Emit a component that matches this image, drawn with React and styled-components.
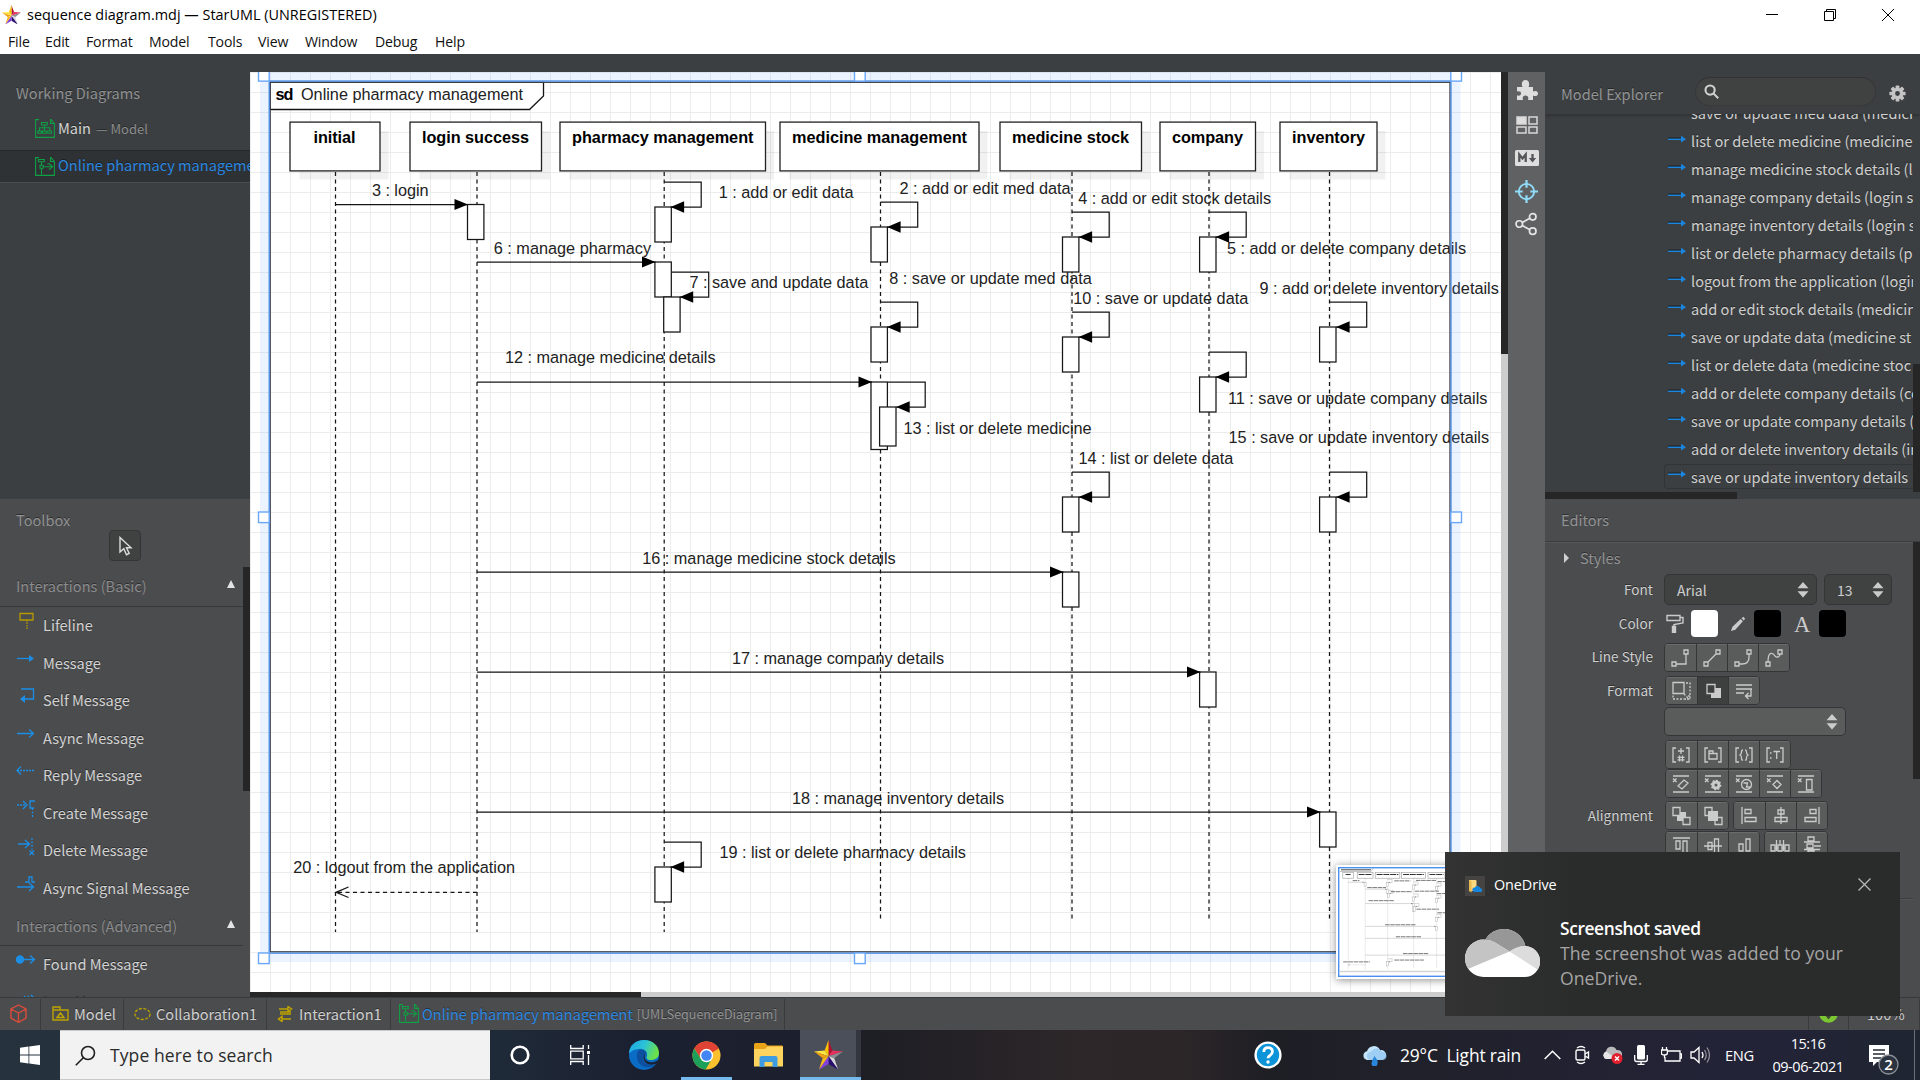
import React from "react";
import styled, { createGlobalStyle, css } from "styled-components";

const UI = '"Noto Sans CJK SC", "Noto Sans", sans-serif';
const WIN = '"Open Sans", "Noto Sans", sans-serif';

const Global = createGlobalStyle`
  * { box-sizing: border-box; }
  html, body { margin: 0; padding: 0; overflow: hidden; }
  svg { display: block; flex: none; }
`;

/* ---------- shell ---------- */
const Screen = styled.div`
  position: relative;
  width: 1920px;
  height: 1080px;
  display: flex;
  flex-direction: column;
  overflow: hidden;
  background: #3c3f41;
  font-family: ${UI};
  font-size: 14.6px;
  white-space: pre;
`;
const TitleBar = styled.header`
  height: 29px;
  flex: none;
  display: flex;
  align-items: center;
  background: #fff;
  color: #000;
  font-family: ${WIN};
  font-size: 14.4px;
  letter-spacing: 0.02px;
  padding-left: 2px;
`;
const TitleText = styled.div`
  margin-left: 6px;
  flex: 1;
`;
const WindowButtons = styled.div`
  display: flex;
  gap: 46px;
  padding-right: 26px;
`;
const MenuBar = styled.nav`
  height: 25px;
  flex: none;
  display: flex;
  background: #fff;
  color: #111;
  font-family: ${WIN};
  font-size: 14.1px;
  line-height: 25px;
  padding-left: 8px;
`;
const MenuItem = styled.div`
  width: ${(p) => p.$w}px;
  letter-spacing: -0.15px;
`;
const ToolStrip = styled.div`
  height: 18px;
  flex: none;
  background: #3c3f41;
`;
const Body = styled.div`
  height: 925px;
  flex: none;
  display: flex;
`;

/* ---------- left sidebar ---------- */
const Sidebar = styled.aside`
  width: 250px;
  flex: none;
  display: flex;
  flex-direction: column;
`;
const WorkingPanel = styled.section`
  height: 427px;
  flex: none;
  background: #3c3f41;
  overflow: hidden;
`;
const PanelTitle = styled.div`
  height: ${(p) => p.$h}px;
  line-height: ${(p) => p.$h - 1}px;
  padding-left: 16px;
  color: #8f9192;
  text-shadow: 0 -1px 0 rgba(0, 0, 0, 0.4);
`;
const DiagramRow = styled.div`
  height: ${(p) => p.$h}px;
  display: flex;
  align-items: center;
  padding: 0 0 3px 35px;
  overflow: hidden;
  color: #d4d4d4;
  text-shadow: 0 -1px 0 rgba(0, 0, 0, 0.4);
  ${(p) =>
    p.$active &&
    css`
      color: #2a87e0;
      background: #2f3234;
      border-top: 1px solid #26282a;
      border-bottom: 1px solid #4a4e50;
      margin-top: 5px;
      padding-bottom: 1px;
    `}
`;
const RowText = styled.span`
  margin-left: 3px;
  line-height: 24px;
  margin-top: -2px;
`;
const RowNote = styled.span`
  margin-left: 5px;
  font-size: 13px;
  color: #8b8d8e;
`;
const Toolbox = styled.section`
  height: 498px;
  background: #4b4c4e;
  overflow: hidden;
`;
const ToolboxLabel = styled.div`
  padding-top: 6px;
`;
const CursorRow = styled.div`
  height: 37px;
  padding-left: 109px;
`;
const CursorButton = styled.div`
  width: 32px;
  height: 31px;
  display: flex;
  align-items: center;
  justify-content: center;
  padding-left: 2px;
  border: 1px solid #343535;
  border-radius: 4px;
  background: #404241;
`;
const ToolScroll = styled.div`
  height: 430px;
  display: flex;
  overflow: hidden;
`;
const ToolList = styled.div`
  width: 243px;
  flex: none;
`;
const ScrollThumb = styled.div`
  width: 7px;
  height: ${(p) => p.$h}px;
  background: #262626;
`;
const GroupHead = styled.div`
  height: ${(p) => p.$h}px;
  line-height: ${(p) => p.$h - 2}px;
  display: flex;
  justify-content: space-between;
  padding: 0 8px 0 16px;
  color: #8b8c8d;
  border-bottom: 1px solid #38393a;
  text-shadow: 0 -1px 0 rgba(0, 0, 0, 0.4);
`;
const GroupArrow = styled.i`
  width: 0;
  height: 0;
  margin-top: 13px;
  border: 4.5px solid transparent;
  border-top: 0;
  border-bottom: 8px solid #e4e4e4;
`;
const ToolItem = styled.div`
  height: 37.5px;
  display: flex;
  color: #d2d2d2;
  padding-left: 16px;
  line-height: 35.5px;
  text-shadow: 0 -1px 0 rgba(0, 0, 0, 0.4);
`;
const ToolIcon = styled.div`
  width: 27px;
  flex: none;
  padding-top: 4px;
`;

/* ---------- canvas ---------- */
const CanvasArea = styled.main`
  width: 1258px;
  flex: none;
  display: flex;
  flex-direction: column;
`;
const CanvasRow = styled.div`
  display: flex;
  height: 920px;
`;
const VScroll = styled.div`
  width: 7px;
  background: linear-gradient(#272727 282px, #cdcdcd 282px);
`;
const HScroll = styled.div`
  height: 5px;
  background: linear-gradient(90deg, #272727 391px, #cdcdcd 391px);
`;
const SideStrip = styled.div`
  width: 37px;
  flex: none;
  display: flex;
  flex-direction: column;
  align-items: center;
  background: #606163;
  padding-top: 4px;
`;
const StripSlot = styled.div`
  height: ${(p) => p.$h}px;
  display: flex;
  align-items: center;
  justify-content: center;
`;

/* ---------- right panels ---------- */
const RightPane = styled.aside`
  width: 375px;
  flex: none;
  display: flex;
  flex-direction: column;
`;
const Explorer = styled.section`
  height: 427px;
  background: #3c3f41;
  overflow: hidden;
`;
const ExplorerHead = styled.div`
  height: 42px;
  display: flex;
  align-items: center;
  padding-left: 16px;
  color: #929495;
  box-shadow: 0 2px 3px rgba(0, 0, 0, 0.2);
  text-shadow: 0 -1px 0 rgba(0, 0, 0, 0.4);
`;
const ExplorerLabel = styled.div`
  width: 134px;
`;
const SearchField = styled.div`
  width: 181px;
  height: 29px;
  margin: 0 13px 3px 0;
  padding-left: 8px;
  display: flex;
  align-items: center;
  border-radius: 15px;
  background: #404241;
  border: 1px solid #37393a;
  border-top-color: #303233;
`;
const TreeWrap = styled.div`
  height: 378px;
  display: flex;
  justify-content: space-between;
  align-items: flex-end;
`;
const Tree = styled.div`
  width: 368px;
  height: 378px;
  overflow: hidden;
  display: flex;
  flex-direction: column;
  justify-content: flex-end;
  padding: 0 0 3px 119px;
`;
const TreeRow = styled.div`
  height: 28px;
  flex: none;
  display: flex;
  align-items: center;
  padding: 0 0 1px 4px;
  gap: 5px;
  color: #cfcfcf;
  overflow: hidden;
  text-shadow: 0 -1px 0 rgba(0, 0, 0, 0.4);
  ${(p) =>
    p.$active &&
    css`
      padding-left: 3px;
      height: 25px;
      margin-top: 1px;
      border: 1px solid #323536;
      border-right: 0;
      border-radius: 4px 0 0 4px;
    `}
`;
const TreeHScroll = styled.div`
  height: 7px;
  width: 192px;
  background: #262626;
`;
const Editors = styled.section`
  height: 498px;
  background: #4b4c4e;
  overflow: hidden;
`;
const EditorsTitle = styled.div`
  height: 43px;
  line-height: 42px;
  padding-left: 16px;
  color: #929394;
  border-bottom: 1px solid #3b3c3d;
  text-shadow: 0 -1px 0 rgba(0, 0, 0, 0.4);
`;
const EditorsBody = styled.div`
  height: 455px;
  display: flex;
`;
const Fields = styled.div`
  width: 368px;
  flex: none;
  border-top: 1px solid #555658;
`;
const StylesHead = styled.div`
  height: 31px;
  display: flex;
  align-items: center;
  gap: 11px;
  padding: 0 0 2px 19px;
  color: #929394;
  text-shadow: 0 -1px 0 rgba(0, 0, 0, 0.4);
`;
const FoldArrow = styled.i`
  border: 5px solid transparent;
  border-right: 0;
  border-left: 5px solid #cfcfcf;
`;
const Field = styled.div`
  height: ${(p) => p.$h}px;
  display: flex;
  align-items: flex-start;
`;
const FieldLabel = styled.div`
  width: 108px;
  margin-right: ${(p) => p.$gap || 11}px;
  text-align: right;
  font-size: 13.6px;
  line-height: ${(p) => p.$lh || 27}px;
  color: #cfcfcf;
  text-shadow: 0 -1px 0 rgba(0, 0, 0, 0.4);
`;
const SelectBox = styled.div`
  width: ${(p) => p.$w}px;
  height: ${(p) => p.$h || 31}px;
  display: flex;
  align-items: center;
  justify-content: space-between;
  padding: 0 7px 0 12px;
  margin-right: 7px;
  border: 1px solid #343536;
  border-radius: 5px;
  background: ${(p) => (p.$light ? "#5a5b5b" : "#404241")};
  color: #cfcfcf;
  font-size: 14px;
`;
const Swatch = styled.div`
  width: 27px;
  height: 27px;
  border-radius: 4px;
  background: ${(p) => p.$c};
  margin-right: ${(p) => p.$gap}px;
`;
const SwatchIcon = styled.div`
  width: ${(p) => p.$w}px;
  height: 27px;
  display: flex;
  align-items: center;
`;
const FontGlyph = styled.div`
  width: 25px;
  font-family: "Liberation Serif", serif;
  font-size: 22.5px;
  line-height: 30px;
  color: #cbcbcb;
`;
const FieldsRule = styled.div`
  height: 2px;
  background: #3b3c3d;
  border-bottom: 1px solid #555658;
`;
const ButtonGroup = styled.div`
  display: flex;
  height: 29px;
  margin-right: 4px;
  border: 1px solid #343536;
  border-radius: 4px;
  background: #5a5b5b;
  overflow: hidden;
`;
const IconButton = styled.div`
  width: 31px;
  display: flex;
  align-items: center;
  justify-content: center;
  padding-right: 1px;
  background: ${(p) => (p.$on ? "#3e3f3f" : "#5a5b5b")};
  box-shadow: inset 0 1px 0 ${(p) => (p.$on ? "#3a3b3b" : "#6a6b6b")};
  & + & {
    border-left: 1px solid #343536;
  }
`;

/* ---------- status bar ---------- */
const StatusBar = styled.footer`
  height: 33px;
  flex: none;
  display: flex;
  background: #4b4c4e;
  border-top: 1px solid #38393a;
  color: #cfcfcf;
  text-shadow: 0 -1px 0 rgba(0, 0, 0, 0.4);
`;
const Crumb = styled.div`
  width: ${(p) => p.$w}px;
  display: flex;
  align-items: center;
  padding: 0 0 2px ${(p) => p.$pad}px;
  gap: ${(p) => p.$gap || 5}px;
  margin-top: 1px;
  border-right: 1px solid #3a3b3c;
  color: ${(p) => (p.$blue ? "#2a87e0" : "#cfcfcf")};
`;
const CrumbNote = styled.span`
  font-size: 12.5px;
  margin-left: -2px;
  color: #929394;
`;
const StatusSpacer = styled.div`
  flex: 1;
  border-right: 1px solid #3a3b3c;
`;

/* ---------- taskbar ---------- */
const Taskbar = styled.div`
  height: 50px;
  flex: none;
  display: flex;
  color: #fff;
  font-family: ${WIN};
  background: linear-gradient(90deg, #26333f 0, #1f2a38 500px, #1b2030 640px, #1c1f2e 800px, #1e1e25 870px, #2d2729 1080px, #2c2628 1180px, #1e1e25 1270px, #20212a 1400px, #232338 1750px, #1f2531 1920px);
`;
const StartButton = styled.div`
  width: 60px;
  display: flex;
  align-items: center;
  justify-content: center;
`;
const SearchBox = styled.div`
  width: 430px;
  display: flex;
  align-items: center;
  gap: 14px;
  padding-left: 15px;
  background: #f2f2f2;
  border: 1px solid #c9c9c9;
  border-width: 1px 0;
  color: #2b2b2b;
  font-size: 17.5px;
  letter-spacing: 0.1px;
`;
const TaskSlot = styled.div`
  width: ${(p) => p.$w}px;
  display: flex;
  align-items: center;
  justify-content: center;
  border-bottom: 3px solid ${(p) => (p.$line ? "#76b9ed" : "transparent")};
  padding-top: 3px;
  background: ${(p) => p.$bg || "none"} border-box;
`;
const TaskSpacer = styled.div`
  width: ${(p) => p.$w}px;
`;
const Weather = styled.div`
  width: 173px;
  display: flex;
  align-items: center;
  gap: 13px;
  font-size: 17.4px;
  letter-spacing: -0.15px;
`;
const Lang = styled.div`
  width: 45px;
  line-height: 50px;
  font-size: 14.7px;
  letter-spacing: -0.3px;
`;
const Clock = styled.div`
  width: 76px;
  display: flex;
  flex-direction: column;
  text-align: center;
  font-size: 14.5px;
  letter-spacing: -0.45px;
  line-height: 23px;
  padding-top: 2px;
`;
const Notify = styled.div`
  width: 68px;
  padding: 14px 0 0 23px;
`;
const BadgeText = styled.text`
  font-family: ${WIN};
  font-size: 15px;
  font-weight: 600;
  fill: #fff;
`;
const DeskEdge = styled.div`
  border-left: 1px solid #68707a;
  width: 6px;
`;

/* ---------- overlays ---------- */
const Thumb = styled.div`
  position: absolute;
  left: 1336px;
  top: 865px;
  width: 140px;
  height: 114px;
  border: 2px solid #fff;
  box-shadow: 0 1px 8px rgba(0, 0, 0, 0.45);
  background: #fff;
`;
const Toast = styled.div`
  position: absolute;
  left: 1445px;
  top: 852px;
  width: 455px;
  height: 164px;
  padding: 24px 29px 0 20px;
  background: linear-gradient(90deg, #323332, #2a2b2b 30%, #2a2b2b);
  color: #fff;
  font-family: ${WIN};
`;
const ToastHead = styled.div`
  height: 20px;
  display: flex;
  align-items: center;
  font-size: 14.4px;
  letter-spacing: -0.1px;
`;
const ToastApp = styled.div`
  width: 20px;
  height: 20px;
  display: flex;
  align-items: center;
  justify-content: center;
  background: #464443;
  margin-right: 9px;
`;
const ToastName = styled.div`
  flex: 1;
  line-height: 20px;
  margin-top: -2px;
`;
const CloseIcon = styled.svg`
  margin-top: -3px;
`;
const ToastMain = styled.div`
  display: flex;
  gap: 20px;
  padding-top: 20px;
`;
const CloudWrap = styled.div`
  padding-top: 13px;
`;
const ToastTitle = styled.div`
  font-weight: 600;
  font-size: 17.4px;
  letter-spacing: -0.4px;
  line-height: 25px;
`;
const ToastText = styled.div`
  font-size: 17.6px;
  letter-spacing: 0.04px;
  line-height: 25px;
  color: #a5a5a5;
`;

/* ---------- diagram data ---------- */
const lifelines = [
  { n: "initial", x1: 290, x2: 380, c: 335.5, end: 932, t: [313.5, 355.5] },
  { n: "login success", x1: 410, x2: 541.5, c: 477, end: 932, t: [422, 529] },
  { n: "pharmacy management", x1: 560, x2: 765.5, c: 664.2, end: 932, t: [572, 753.5] },
  { n: "medicine management", x1: 780, x2: 979, c: 880.5, end: 919, t: [792, 967] },
  { n: "medicine stock", x1: 1000, x2: 1141.5, c: 1072, end: 919, t: [1012, 1129] },
  { n: "company", x1: 1160, x2: 1255.5, c: 1209, end: 919, t: [1172, 1243] },
  { n: "inventory", x1: 1280, x2: 1377, c: 1329.5, end: 919, t: [1292, 1365] },
];
const bars = [
  [467.5, 204.5, 35], [654.9, 207, 35], [654.9, 262, 35], [663.7, 297, 35],
  [871, 227, 35], [871, 327, 35], [871, 382, 67.5], [879.6, 407, 39],
  [1062.5, 237, 35], [1199.6, 237, 35], [1062.5, 337, 35], [1319.6, 327, 35],
  [1199.6, 377, 35], [1062.5, 497, 35], [1319.6, 497, 35], [1062.5, 572, 35],
  [1199.6, 672, 35], [1319.6, 812, 35], [654.9, 867, 35],
];
const calls = [
  [336, 468, 204.5], [477, 655.5, 262], [477, 872, 382], [477, 1063.5, 572],
  [477, 1200.5, 672], [477, 1320.5, 812],
];
const loops = [
  [664, 182], [880.5, 202], [1072, 212], [1209, 212], [671.5, 272], [880.5, 302],
  [1329.5, 302], [1072, 312], [1209, 352], [888, 382], [1072, 472], [1329.5, 472], [664, 842],
];
const labels = [
  ["1 : add or edit data", 718.8, 853.5, 198],
  ["2 : add or edit med data", 899.6, 1070.6, 194.3],
  ["3 : login", 372, 428.5, 196],
  ["4 : add or edit stock details", 1078.2, 1271, 204],
  ["5 : add or delete company details", 1227, 1466, 254],
  ["6 : manage pharmacy", 493.8, 651, 254],
  ["7 : save and update data", 689.4, 868.2, 288],
  ["8 : save or update med data", 889.2, 1091.8, 284],
  ["9 : add or delete inventory details", 1259.4, 1498.8, 294],
  ["10 : save or update data", 1073.3, 1248.2, 304],
  ["11 : save or update company details", 1228, 1487.4, 404],
  ["12 : manage medicine details", 505, 715.5, 363],
  ["13 : list or delete medicine", 903.5, 1091.6, 434],
  ["14 : list or delete data", 1078.5, 1233.3, 464],
  ["15 : save or update inventory details", 1228.6, 1489, 443],
  ["16 : manage medicine stock details", 642.3, 895.7, 564],
  ["17 : manage company details", 732, 944, 664],
  ["18 : manage inventory details", 792, 1004, 804],
  ["19 : list or delete pharmacy details", 719.4, 965.9, 858],
  ["20 : logout from the application", 293.3, 515, 873],
];

const DiagramSvg = styled.svg`
  background: #fff;
  font-family: "Liberation Sans", Arial, sans-serif;
  font-size: 16.25px;
`;
const HeadText = styled.text`
  font-weight: bold;
  fill: #000;
`;
const LabelText = styled.text`
  fill: #222;
`;

function Shapes({ sw = 1.25 }) {
  return (
    <g fill="none" stroke="#161616" strokeWidth={sw}>
      {lifelines.map((l) => (
        <path key={l.n} d={`M${l.c} 172V${l.end}`} strokeDasharray="4 3.5" />
      ))}
      {bars.map(([x, y, h], i) => (
        <rect key={i} x={x} y={y} width="16.4" height={h} fill="#fff" />
      ))}
      {calls.map(([a, b, y], i) => (
        <g key={i}>
          <path d={`M${a} ${y}H${b}`} />
          <path d={`M${b} ${y}l-13.5 -5.6v11.2z`} fill="#000" stroke="none" />
        </g>
      ))}
      {loops.map(([x, y], i) => {
        const nested = x === 671.5 || x === 888;
        const tip = nested ? x + 8.2 : x + 6.6;
        return (
          <g key={i}>
            <path d={`M${x} ${y}H${x + 37.2}V${y + 25}H${tip}`} />
            <path d={`M${tip} ${y + 25}l13.5 -5.8v11.6z`} fill="#000" stroke="none" />
          </g>
        );
      })}
      <path d="M477 892.3H336" strokeDasharray="4 3.5" />
      <path d="M348.5 887L336 892.3L348.5 897.5" />
    </g>
  );
}

function Diagram() {
  const handles = [
    [258.5, 70.5], [854.5, 70.5], [1450.8, 70.5], [258.5, 512], [1450.8, 512],
    [258.5, 953], [854.5, 953], [1450.8, 953],
  ];
  return (
    <DiagramSvg width="1251" height="920" viewBox="250 72 1251 920">
      <defs>
        <pattern id="grid" x="250" y="72" width="20" height="20" patternUnits="userSpaceOnUse">
          <path d="M0.5 0V20M0 0.5H20" stroke="#ececec" fill="none" />
        </pattern>
      </defs>
      <rect x="250" y="72" width="1251" height="920" fill="url(#grid)" />
      <path d="M270 82.3H543.5V96L529.5 109.5H270z" fill="#fff" stroke="#161616" strokeWidth="1.3" />
      <HeadText x="275.5" y="100" textLength="18">sd</HeadText>
      <LabelText x="301" y="100" textLength="222">Online pharmacy management</LabelText>
      {lifelines.map((l) => (
        <g key={l.n}>
          <rect x={l.x1 + 9.5} y="131" width={l.x2 - l.x1 - 1} height="48.5" fill="#000" fillOpacity="0.055" />
          <rect x={l.x1} y="122.1" width={l.x2 - l.x1} height="48.8" fill="#fff" stroke="#222" strokeWidth="1.3" />
          <HeadText x={l.t[0]} y="143" textLength={l.t[1] - l.t[0]}>{l.n}</HeadText>
        </g>
      ))}
      <Shapes />
      {labels.map(([t, a, b, y]) => (
        <LabelText key={t} x={a} y={y} textLength={b - a}>{t}</LabelText>
      ))}
      <path
        d="M260 60H1460.5V962H260zM269.5 82V953H1451V82z"
        fillRule="evenodd"
        fill="#69aaff"
        fillOpacity="0.14"
      />
      <rect x="270.2" y="82.3" width="1179.8" height="869.5" fill="none" stroke="#3a3f48" strokeWidth="1.3" />
      <rect x="269.2" y="81" width="1181.8" height="872.2" fill="none" stroke="#4a8fea" strokeWidth="1.3" />
      {handles.map(([x, y], i) => (
        <rect key={i} x={x} y={y} width="10.7" height="10.6" fill="#fff" stroke="#69a7f8" strokeWidth="1.4" />
      ))}
    </DiagramSvg>
  );
}

function MiniDiagram() {
  return (
    <svg width="136" height="110" viewBox="1338 867 136 110">
      <rect x="1338.7" y="867.7" width="160" height="108.6" fill="#fff" stroke="#4a90f0" strokeWidth="1.4" />
      <path d="M1340 971.5H1480" stroke="#d4d4d4" strokeWidth="1.5" />
      <path d="M1341 869.8h30" stroke="#444" strokeWidth="1" />
      <path d="M1340 871.5h31l2-3" stroke="#888" strokeWidth="0.5" fill="none" />
      <g transform="translate(1308 857.7) scale(.12)">
        {lifelines.map((l) => (
          <g key={l.n}>
            <rect x={l.x1} y="122" width={l.x2 - l.x1} height="49" fill="#fff" stroke="#999" strokeWidth="5" />
            <path d={`M${l.t[0]} 140H${l.t[1]}`} stroke="#333" strokeWidth="9" strokeDasharray="50 6" />
          </g>
        ))}
        <g opacity="0.45">
          <Shapes sw={3} />
        </g>
        {labels.map(([t, a, b, y]) => (
          <path key={t} d={`M${a} ${y - 5}H${b}`} stroke="#444" strokeWidth="6" strokeDasharray="38 5" />
        ))}
      </g>
    </svg>
  );
}

/* ---------- icons ---------- */
const StarIcon = ({ size }) => (
  <svg width={size} height={size * 1.03} viewBox="0 0 30 31">
    <path d="M15 0L19 11L15 17z" fill="#b01030" />
    <path d="M15 0L11 11L15 17z" fill="#ffc400" />
    <path d="M0 12L11 11L15 17z" fill="#ffe640" />
    <path d="M0 12L9 19L15 17z" fill="#f0a010" />
    <path d="M30 12L19 11L15 17z" fill="#e8305c" />
    <path d="M30 12L21 19L15 17z" fill="#8b8b90" />
    <path d="M25 31L21 19L15 17z" fill="#d8d8dc" />
    <path d="M25 31L15 25V17z" fill="#2a0d70" />
    <path d="M5 31L15 25V17z" fill="#8340e0" />
    <path d="M5 31L9 19L15 17z" fill="#f8b820" />
  </svg>
);
const DocIcon = ({ seq }) => (
  <svg width="20" height="19" viewBox="0 0 20 19" fill="none" stroke="#0f9f45" strokeWidth="1.1">
    <path d="M4 .6H.6V18.4H19.4V4.500H15.500V.6H16L19.400 4.500" />
    {seq ? (
      <path d="M3.500 2.500h5.800v2.300H3.500zM6.500 5v3.200M5 8.200h3.200v3H5zM6.500 11.200v6M8.500 9.700h9M14 6.500l3.500 3.200l-3.500 3.200M13 6v1.500" />
    ) : (
      <path d="M6.500 3.500h5.800v2.500H6.500zM9.400 6v2.800M4.500 11.500V8.800h10.300v2.700M9.400 8.800v2.700M2.800 12h3.700v2.200H2.800zM7.600 12h3.700v2.200H7.600zM12.800 12h3.700v2.200h-3.700z" />
    )}
  </svg>
);
const Arrow = () => (
  <svg width="18" height="16" viewBox="0 2 18 16">
    <path d="M0 7.200H13" stroke="#10151a" strokeWidth="1" />
    <path d="M0 8.300H15" stroke="#1b86e0" strokeWidth="1.400" />
    <path d="M13 4.800L18 8.200L13 11.600z" fill="#1b86e0" />
  </svg>
);
const toolPaths = {
  life: <g stroke="#b59a00"><path d="M4 2.500h13v6.500H4z" /><path d="M11 9v10" strokeDasharray="1.500 1" /></g>,
  msg: <g><path d="M1 9.500h14" /><path d="M13 6l5 3.500l-5 3.500z" fill="#1b8ee6" stroke="none" /></g>,
  self: <g><path d="M5 3h12.500v10H7" /><path d="M9 9l-5 4l5 4z" fill="#1b8ee6" stroke="none" /></g>,
  async: <path d="M1 9.500h16M13 5.500l4.500 4l-4.500 4" />,
  reply: <g><path d="M5 5.500l-4 4l4 4" /><path d="M1 9.500h17" strokeDasharray="2 1" /></g>,
  create: <g><path d="M1 6h10" strokeDasharray="2 1" /><path d="M7 2l4 4l-4 4M19 2h-5v7h4" /><path d="M16.500 9v10" strokeDasharray="2 1.500" /></g>,
  del: <g><path d="M2 8h11M9 4l4.500 4l-4.500 4M13.500 14.500l4.500 4.500M18 14.500l-4.500 4.500" /><path d="M16 2v12" strokeDasharray="2 1.500" /></g>,
  signal: <path d="M1 13h16M13 9l4.500 4l-4.500 4M9 8h4V3h3v5h3" />,
  found: <g><path d="M5 9.500h13M14 5.500l4.500 4l-4.500 4" /><circle cx="4" cy="9.500" r="3.500" fill="#1b8ee6" /></g>,
  lost: <path d="M8 8l5 5M13 8l-5 5M15 7l4 4" />,
};
const ToolGlyph = ({ k }) => (
  <svg width="20" height="20" viewBox="0 0 20 20" fill="none" stroke="#1b8ee6" strokeWidth="1.300">
    {toolPaths[k]}
  </svg>
);
const Search = ({ s, w, c }) => (
  <svg width={s} height={s} viewBox="0 0 16 16" fill="none" stroke={c} strokeWidth={w}>
    <circle cx="6.500" cy="6.500" r="4.900" />
    <path d="M10 10l5.200 5.200" />
  </svg>
);
const Gear = ({ s = 17, c = "#c4c4c4", h = "#3c3f41" }) => (
  <svg width={s} height={s} viewBox="-10 -10 20 20">
    {[0, 45, 90, 135].map((a) => (
      <rect key={a} x="-2.200" y="-9.500" width="4.400" height="19" rx="1" fill={c} transform={`rotate(${a})`} />
    ))}
    <circle r="6.800" fill={c} />
    <circle r="2.800" fill={h} />
  </svg>
);
const Updown = () => (
  <svg width="12" height="16" viewBox="0 0 12 16" fill="#cbcbcb">
    <path d="M6 0l5.500 6.200H.5zM6 15.500L.5 9.300h11z" />
  </svg>
);

const glyphs = {
  rect: <path d="M2 14h4v4H2zM14 2h4v4h-4zM6 16h10V6" />,
  obl: <path d="M2 14h4v4H2zM14 2h4v4h-4zM6 14l8-8" />,
  round: <path d="M2 14h4v4H2zM14 2h4v4h-4zM6 16h3q7 0 7-7V6" />,
  curve: <path d="M2 14h4v4H2zM14 2h4v4h-4zM4 14C4 2 9 5 11 8C13 10 16 9 16 6" />,
  size: <g><path d="M2 1.500h11v11H2z" /><path d="M15 2h4v16H2v-4M13 13l5 5M18 14v4h-4" strokeDasharray="2 1.500" /></g>,
  shadow: <g><path d="M8 7h10v10H8z" fill="#cbcbcb" stroke="none" /><path d="M4 3.500h8v9H4z" fill="#3e3f3f" /></g>,
  wrap: <path d="M2 4h16M2 8h16M2 12h8M17 8v7h-5M14.500 12l-3 3l3 3" />,
  vis: <g><path d="M5 3H2v14h3M15 3h3v14h-3" /><path d="M10 3v6M7 6h6M8.500 10.500v6M11.500 10.500v6M6.500 12.300h7M6.500 14.800h7" /></g>,
  ns: <path d="M5 3H2v14h3M15 3h3v14h-3M6 6h4v2.500h4V14H6zM6 8.500h4" />,
  prop: <path d="M5 3H2v14h3M15 3h3v14h-3M9 5Q7.500 5 7.500 7T6 10Q7.500 10.500 7.500 13T9 15M11 5Q12.500 5 12.500 7T14 10Q12.500 10.500 12.500 13T11 15" />,
  type: <path d="M5 3H2v14h3M15 3h3v14h-3M5 8h1.500M5 13h1.500M8.500 6.500h6.500M11.700 6.500V14" />,
  sa: <path d="M2 2h16M2 18h16M2 4.500l3.500 3.500M5.500 4.500L2 8M7 12l6-6l4 3l-6 6z" />,
  so: <g><path d="M2 2h16M2 18h16M2 4.500l3.500 3.500M5.500 4.500L2 8" /><circle cx="13" cy="11" r="3" strokeWidth="3" /><circle cx="13" cy="11" r="4.700" strokeWidth="1.300" strokeDasharray="1.800 1.800" /></g>,
  sr: <g><path d="M2 2h16M2 18h16M2 4.500l3.500 3.500M5.500 4.500L2 8" /><circle cx="12.500" cy="10.500" r="5" /><path d="M9.500 9h4l-1 4h4" /></g>,
  sc: <path d="M2 2h16M2 18h16M2 4.500l3.500 3.500M5.500 4.500L2 8M12 6.500l4 4l-4 4l-4-4z" />,
  sp: <path d="M2 2h16M2 18h16M2 4.500l3.500 3.500M5.500 4.500L2 8M10.500 5.500h5.500V16h-5.500z" />,
  back: <g><path d="M6 6h9v9H6z" fill="#cbcbcb" stroke="none" /><path d="M2 1.500h7v8H2zM12 11.500h7v7h-7z" fill="#5a5b5b" /></g>,
  front: <g><path d="M2 1.500h7v8H2zM12 11.500h7v7h-7z" /><path d="M5 5h10v10H5z" fill="#cbcbcb" stroke="none" /></g>,
  al: <path d="M3 1v17M6 3.500h6v4H6zM6 11.500h11v4H6z" />,
  ac: <path d="M10 1v17M7 4h6v4H7zM4 11.500h12v4H4z" fill="#5a5b5b" />,
  ar: <path d="M17 1v17M8 3.500h6v4H8zM3 11.500h11v4H3z" />,
  at: <path d="M2 2h17M5 5h4v8H5zM12 5h4v14h-4z" />,
  am: <path d="M1 10h18M5 6.500h4v7H5zM11.500 3h4v14h-4z" fill="#5a5b5b" />,
  ab: <path d="M2 18h17M5 8h4v7H5zM12 3h4v12h-4z" />,
  sh: <path d="M1 9h4v6H1zM8 9h4v6H8zM15 9h4v6h-4zM6.500 4v11M13.500 4v11M10 4v5M5 12h3M12 12h3" />,
  sv: <path d="M6 1h6v4H6zM5 8h6v4H5zM6 15h6v4H6zM2 6h16M12 10h7M2 13.500h16" />,
};
const Group = ({ items, on }) => (
  <ButtonGroup>
    {items.map((k) => (
      <IconButton key={k} $on={k === on}>
        <svg width="20" height="20" viewBox="0 0 20 20" fill="none" stroke="#cbcbcb" strokeWidth="1.300">
          {glyphs[k]}
        </svg>
      </IconButton>
    ))}
  </ButtonGroup>
);

const tools = [
  ["life", "Lifeline"], ["msg", "Message"], ["self", "Self Message"], ["async", "Async Message"],
  ["reply", "Reply Message"], ["create", "Create Message"], ["del", "Delete Message"],
  ["signal", "Async Signal Message"],
];
const menus = [
  ["File", 37], ["Edit", 41], ["Format", 63], ["Model", 59], ["Tools", 50], ["View", 47],
  ["Window", 70], ["Debug", 60], ["Help", 40],
];
const tree = [
  "save or update med data (medici",
  "list or delete medicine (medicine",
  "manage medicine stock details (l",
  "manage company details (login s",
  "manage inventory details (login s",
  "list or delete pharmacy details (p",
  "logout from the application (login",
  "add or edit stock details (medicin",
  "save or update data (medicine st",
  "list or delete data (medicine stoc",
  "add or delete company details (co",
  "save or update company details (",
  "add or delete inventory details (in",
  "save or update inventory details",
];

const Edge = () => (
  <svg width="32" height="32" viewBox="0 0 32 32">
    <defs>
      <linearGradient id="eg1" x1="0" y1="0" x2="1" y2="0.300">
        <stop offset="0" stopColor="#1ba5e8" />
        <stop offset=".55" stopColor="#2cc3d6" />
        <stop offset="1" stopColor="#6be04a" />
      </linearGradient>
    </defs>
    <circle cx="16" cy="16" r="15" fill="#0a6cc4" />
    <path d="M1 15C1 6 8 1 16 1C25 1 31 7 31 14C31 19 27 21 23 21C19 21 18 19 19 17C20 12 15 9 11 10C6 10 2 13 1 15z" fill="url(#eg1)" />
    <path d="M11 11C8 14 8 22 13 26C18 30 25 28 28 25C24 28 16 25 15 20C14.500 17 16 15 18.500 14C17 11 14 10 11 11z" fill="#0c4f9e" />
    <path d="M18 14.500c-2.500 3-1.500 7 3 8.500c3 .8 6.500 0 9-2l-.8 3c-3 2-8 2.500-11 0c-3.500-3-3.500-8-.2-9.500z" fill="#1b2030" />
  </svg>
);
const Chrome = () => (
  <svg width="29" height="29" viewBox="0 0 30 30">
    <circle cx="15" cy="15" r="14.500" fill="#fbc02d" />
    <path d="M15 15L2.400 8A14.500 14.500 0 0 1 27.600 8z" fill="#e04335" />
    <path d="M15 8H27.600A14.500 14.500 0 0 0 2.400 7.800L9 18z" fill="#e04335" />
    <path d="M2.400 7.800A14.500 14.500 0 0 0 14 29.500L20.500 18.500L9 18z" fill="#1da05a" />
    <circle cx="15" cy="15" r="6.900" fill="#fff" />
    <circle cx="15" cy="15" r="5.400" fill="#4285f4" />
  </svg>
);

export default function App() {
  return (
    <>
      <Global />
      <Screen>
        <TitleBar>
          <StarIcon size={19} />
          <TitleText>sequence diagram.mdj — StarUML (UNREGISTERED)</TitleText>
          <WindowButtons>
            <svg width="12" height="12" viewBox="0 0 12 12"><path d="M0 5.500h12" stroke="#000" /></svg>
            <svg width="12" height="12" viewBox="0 0 12 12" fill="none" stroke="#000"><path d="M.5 2.500h9v9h-9zM2.500 2.500v-2h9v9h-2" /></svg>
            <svg width="12" height="12" viewBox="0 0 12 12"><path d="M0 0l12 12M12 0L0 12" stroke="#000" /></svg>
          </WindowButtons>
        </TitleBar>
        <MenuBar>
          {menus.map(([m, w]) => (
            <MenuItem key={m} $w={w}>{m}</MenuItem>
          ))}
        </MenuBar>
        <ToolStrip />
        <Body>
          <Sidebar>
            <WorkingPanel>
              <PanelTitle $h={43}>Working Diagrams</PanelTitle>
              <DiagramRow $h={30}>
                <DocIcon />
                <RowText>Main</RowText>
                <RowNote>— Model</RowNote>
              </DiagramRow>
              <DiagramRow $h={33} $active>
                <DocIcon seq />
                <RowText>Online pharmacy management</RowText>
              </DiagramRow>
            </WorkingPanel>
            <Toolbox>
              <PanelTitle $h={31}>
                <ToolboxLabel>Toolbox</ToolboxLabel>
              </PanelTitle>
              <CursorRow>
                <CursorButton>
                  <svg width="16" height="20" viewBox="0 0 16 20" fill="none" stroke="#dcdcdc" strokeWidth="1.400">
                    <path d="M2 1.500V16l3.800-3.300l2.700 6l2.700-1.300l-2.700-5.700h4.500z" />
                  </svg>
                </CursorButton>
              </CursorRow>
              <ToolScroll>
                <ToolList>
                  <GroupHead $h={40}>Interactions (Basic)<GroupArrow /></GroupHead>
                  {tools.map(([k, t]) => (
                    <ToolItem key={k}>
                      <ToolIcon><ToolGlyph k={k} /></ToolIcon>
                      {t}
                    </ToolItem>
                  ))}
                  <GroupHead $h={39}>Interactions (Advanced)<GroupArrow /></GroupHead>
                  <ToolItem>
                    <ToolIcon><ToolGlyph k="found" /></ToolIcon>
                    Found Message
                  </ToolItem>
                  <ToolItem>
                    <ToolIcon><ToolGlyph k="lost" /></ToolIcon>
                    Lost Message
                  </ToolItem>
                </ToolList>
                <ScrollThumb $h={224} />
              </ToolScroll>
            </Toolbox>
          </Sidebar>

          <CanvasArea>
            <CanvasRow>
              <Diagram />
              <VScroll />
            </CanvasRow>
            <HScroll />
          </CanvasArea>

          <SideStrip>
            <StripSlot $h={27}>
              <svg width="22" height="22" viewBox="0 0 22 22" fill="#dedede">
                <path d="M1 8h5.500C5 5 6 1 9.500 1S14 5 12.500 8H17v4.500c3-1.500 5 0 5 2s-2 3.500-5 2V21h-5c1-3-.5-4.500-2.500-4.500S6 18 7 21H1v-4.500C4 17 5 16 5 14.500S4 12 1 12.500z" />
              </svg>
            </StripSlot>
            <StripSlot $h={43}>
              <svg width="22" height="18" viewBox="0 0 22 18" fill="none" stroke="#d8d8d8" strokeWidth="1.500">
                <path d="M1 1h9v7H1z" fill="#dedede" />
                <path d="M13 1h8v7h-8zM1 11h9v6H1zM13 11h8v6h-8z" />
              </svg>
            </StripSlot>
            <StripSlot $h={24}>
              <svg width="24" height="16" viewBox="0 0 24 16">
                <rect width="24" height="16" rx="1.500" fill="#dedede" />
                <path d="M4.300 12V4.500l3.200 4l3.200-4V12M17.500 4v5" fill="none" stroke="#55565a" strokeWidth="2.300" />
                <path d="M13.800 8h7.400L17.500 12.500z" fill="#55565a" />
              </svg>
            </StripSlot>
            <StripSlot $h={43}>
              <svg width="23" height="23" viewBox="0 0 24 24" fill="none" stroke="#8fdcf8" strokeWidth="2">
                <circle cx="12" cy="12" r="8" />
                <path d="M12 0v8M12 16v8M0 12h8M16 12h8" strokeWidth="2.300" />
              </svg>
            </StripSlot>
            <StripSlot $h={22}>
              <svg width="23" height="24" viewBox="0 0 24 24" fill="none" stroke="#e4e4e4" strokeWidth="1.800">
                <circle cx="4.500" cy="12" r="3.400" />
                <circle cx="18.500" cy="4.500" r="3.400" />
                <circle cx="18.500" cy="19.500" r="3.400" />
                <path d="M7.500 10.400l8-4.300M7.500 13.600l8 4.300" />
              </svg>
            </StripSlot>
          </SideStrip>

          <RightPane>
            <Explorer>
              <ExplorerHead>
                <ExplorerLabel>Model Explorer</ExplorerLabel>
                <SearchField><Search s={15} w={2.200} c="#d0d0d0" /></SearchField>
                <Gear />
              </ExplorerHead>
              <TreeWrap>
                <Tree>
                  {tree.map((t, i) => (
                    <TreeRow key={t} $active={i === tree.length - 1}>
                      <Arrow />
                      {t}
                    </TreeRow>
                  ))}
                </Tree>
                <ScrollThumb $h={128} />
              </TreeWrap>
              <TreeHScroll />
            </Explorer>
            <Editors>
              <EditorsTitle>Editors</EditorsTitle>
              <EditorsBody>
                <Fields>
                  <StylesHead><FoldArrow />Styles</StylesHead>
                  <Field $h={36}>
                    <FieldLabel $lh={30}>Font</FieldLabel>
                    <SelectBox $w={153}>Arial<Updown /></SelectBox>
                    <SelectBox $w={68}>13<Updown /></SelectBox>
                  </Field>
                  <Field $h={33}>
                    <FieldLabel $gap={13}>Color</FieldLabel>
                    <SwatchIcon $w={25}>
                      <svg width="18" height="19" viewBox="0 0 18 19" fill="none" stroke="#cbcbcb" strokeWidth="1.400">
                        <path d="M1 1.500h13v5H1zM14 3.500h3v5.500l-9 1.500v2" />
                        <path d="M6.500 12.500h3v6h-3z" fill="#cbcbcb" />
                      </svg>
                    </SwatchIcon>
                    <Swatch $c="#fff" $gap={12} />
                    <SwatchIcon $w={24}>
                      <svg width="16" height="18" viewBox="0 0 18 18" fill="#cbcbcb">
                        <path d="M1 17l1.800-5L12 3.500l2.500 2.500L6 15.500zM13 2.500l2-1.700l2 2.200L15.500 5z" />
                      </svg>
                    </SwatchIcon>
                    <Swatch $c="#000" $gap={13} />
                    <FontGlyph>A</FontGlyph>
                    <Swatch $c="#000" $gap={0} />
                  </Field>
                  <Field $h={33}>
                    <FieldLabel>Line Style</FieldLabel>
                    <Group items={["rect", "obl", "round", "curve"]} />
                  </Field>
                  <Field $h={31}>
                    <FieldLabel $gap={12} $lh={28}>Format</FieldLabel>
                    <Group items={["size", "shadow", "wrap"]} on="shadow" />
                  </Field>
                  <Field $h={33}>
                    <FieldLabel />
                    <SelectBox $w={182} $h={29} $light><span /><Updown /></SelectBox>
                  </Field>
                  <Field $h={29}>
                    <FieldLabel $gap={12} />
                    <Group items={["vis", "ns", "prop", "type"]} />
                  </Field>
                  <Field $h={32}>
                    <FieldLabel $gap={12} />
                    <Group items={["sa", "so", "sr", "sc", "sp"]} />
                  </Field>
                  <Field $h={30}>
                    <FieldLabel $gap={12} $lh={29}>Alignment</FieldLabel>
                    <Group items={["back", "front"]} />
                    <Group items={["al", "ac", "ar"]} />
                  </Field>
                  <Field $h={67}>
                    <FieldLabel $gap={12} />
                    <Group items={["at", "am", "ab"]} />
                    <Group items={["sh", "sv"]} />
                  </Field>
                  <FieldsRule />
                </Fields>
                <ScrollThumb $h={237} />
              </EditorsBody>
            </Editors>
          </RightPane>
        </Body>

        <StatusBar>
          <Crumb $w={41} $pad={10}>
            <svg width="17" height="19" viewBox="0 0 17 19" fill="none" stroke="#dc4b3a" strokeWidth="1.400">
              <path d="M8.500 1l7.500 4v9l-7.500 4.300L1 14V5zM1 5l7.500 4L16 5M8.500 9v9" />
            </svg>
          </Crumb>
          <Crumb $w={83} $pad={11}>
            <svg width="17" height="15" viewBox="0 0 17 15" fill="none" stroke="#bda300" strokeWidth="1.400">
              <path d="M1 14V1h7v3h8v10zM1 4h7M5 11.500L8.500 7l3.500 4.500z" />
            </svg>
            Model
          </Crumb>
          <Crumb $w={143} $pad={10}>
            <svg width="17" height="14" viewBox="0 0 17 14" fill="none" stroke="#bda300" strokeWidth="1.300">
              <ellipse cx="8.500" cy="7" rx="7.600" ry="5.500" strokeDasharray="3 1.500" />
            </svg>
            Collaboration1
          </Crumb>
          <Crumb $w={124} $pad={10} $gap={6}>
            <svg width="16" height="16" viewBox="0 0 16 16" fill="none" stroke="#bda300" strokeWidth="1.500">
              <path d="M2 3h9M11 .5l3.500 2.500L11 5.500zM14 8H3M5 10.500v5L1.500 13zM5 13h9M3 6h11" />
            </svg>
            Interaction1
          </Crumb>
          <Crumb $w={394} $pad={8} $gap={3} $blue>
            <DocIcon seq />
            Online pharmacy management
            <CrumbNote> [UMLSequenceDiagram]</CrumbNote>
          </Crumb>
          <StatusSpacer />
          <Crumb $w={40} $pad={10}>
            <svg width="19" height="19" viewBox="0 0 19 19">
              <circle cx="9.500" cy="9.500" r="9.300" fill="#7cc832" />
              <path d="M4.500 7l5 6.500L14.500 7" fill="none" stroke="#3c4a35" strokeWidth="2.500" />
            </svg>
          </Crumb>
          <Crumb $w={71} $pad={18}>100%</Crumb>
        </StatusBar>

        <Taskbar>
          <StartButton>
            <svg width="20" height="20" viewBox="0 0 20 20" fill="#fff">
              <path d="M0 2.800L8.500 1.600V9.600H0zM9.300 1.500L20 0V9.600H9.300zM0 10.400H8.500V18.400L0 17.200zM9.300 10.400H20V20L9.300 18.500z" />
            </svg>
          </StartButton>
          <SearchBox>
            <svg width="21" height="21" viewBox="0 0 21 21" fill="none" stroke="#1f1f1f" strokeWidth="1.600">
              <circle cx="13" cy="8" r="6.500" />
              <path d="M8.300 12.700L.8 20.200" />
            </svg>
            Type here to search
          </SearchBox>
          <TaskSlot $w={60}>
            <svg width="20" height="20" viewBox="0 0 20 20"><circle cx="10" cy="10" r="8.300" fill="none" stroke="#fff" strokeWidth="2.600" /></svg>
          </TaskSlot>
          <TaskSlot $w={60}>
            <svg width="20" height="20" viewBox="0 0 20 20" fill="none" stroke="#fff" strokeWidth="1.300">
              <path d="M.7 0v3.500h12.500V0M.7 20v-3.500h12.500V20M.7 6.200h12.500v7.600H.7zM18.500 0v4M18.500 10v10" />
              <path d="M17 6h3v3h-3z" fill="#fff" stroke="none" />
            </svg>
          </TaskSlot>
          <TaskSlot $w={67}><Edge /></TaskSlot>
          <TaskSpacer $w={4} />
          <TaskSlot $w={51} $line><Chrome /></TaskSlot>
          <TaskSpacer $w={10} />
          <TaskSlot $w={52}>
            <svg width="29" height="24" viewBox="0 0 29 24">
              <path d="M0 1.500Q0 0 1.500 0H11l2.500 2.500H28Q29 2.500 29 4V23H0z" fill="#e8a318" />
              <path d="M0 6h11l2.500-2.500H29V23.500H0z" fill="#ffd45e" />
              <path d="M5.500 24v-9q0-2 2-2h14q2 0 2 2v9h-5v-5h-8v5z" fill="#3f9bdf" />
            </svg>
          </TaskSlot>
          <TaskSpacer $w={6} />
          <TaskSlot $w={56} $line $bg="#4b4f5a"><StarIcon size={29} /></TaskSlot>
          <TaskSlot $w={5} $line $bg="#34363f" />
          <TaskSpacer $w={392} />
          <TaskSlot $w={30}>
            <svg width="28" height="28" viewBox="0 0 28 28">
              <circle cx="14" cy="14" r="12.400" fill="#0c93d8" stroke="#fff" strokeWidth="2.400" />
              <path d="M9.800 11q0-4.300 4.300-4.300t4.300 4q0 2.200-2.200 3.500t-2.200 3" fill="none" stroke="#fff" strokeWidth="2.800" />
              <circle cx="14" cy="21" r="1.700" fill="#fff" />
            </svg>
          </TaskSlot>
          <TaskSpacer $w={79} />
          <Weather>
            <svg width="25" height="21" viewBox="0 0 25 21">
              <path d="M5 15a4.500 4.500 0 0 1 0-8.800A7 7 0 0 1 18 5a5 5 0 0 1 2 10z" fill="#c3e4fa" />
              <path d="M9 15a4 4 0 0 1 0-8a6 6 0 0 1 11 0a4 4 0 0 1 1 8z" fill="#8ec5f0" opacity=".7" />
              <path d="M12.500 11q4 5 3 7.500a3 3 0 0 1-6 0q0-2.500 3-7.500z" fill="#2a86d8" />
            </svg>
            29°C  Light rain
          </Weather>
          <TaskSpacer $w={8} />
          <TaskSlot $w={18}>
            <svg width="17" height="10" viewBox="0 0 17 10" fill="none" stroke="#fff" strokeWidth="1.500"><path d="M.7 9L8.500 1.200L16.300 9" /></svg>
          </TaskSlot>
          <TaskSpacer $w={10} />
          <TaskSlot $w={22}>
            <svg width="16" height="20" viewBox="0 0 16 20" fill="none" stroke="#fff" strokeWidth="1.400">
              <rect x="2" y="5" width="9" height="10" rx="1.500" />
              <path d="M11 9l3.500-2v6L11 11M3 3Q7 0 11 3M3 17q4 3 8 0" />
            </svg>
          </TaskSlot>
          <TaskSpacer $w={8} />
          <TaskSlot $w={22}>
            <svg width="21" height="18" viewBox="0 0 21 18">
              <path d="M4 13a4 4 0 0 1 0-7.500A5.500 5.500 0 0 1 14.500 4a4.500 4.500 0 0 1 2 9z" fill="#b9b9bb" />
              <path d="M4 13a4 4 0 0 1 0-7.500L15 13z" fill="#e6e6e6" />
              <circle cx="15" cy="12.500" r="5.500" fill="#e0202c" />
              <path d="M13 10.500l4 4M17 10.500l-4 4" stroke="#fff" strokeWidth="1.400" />
            </svg>
          </TaskSlot>
          <TaskSpacer $w={9} />
          <TaskSlot $w={18}>
            <svg width="14" height="20" viewBox="0 0 14 20" fill="none" stroke="#fff" strokeWidth="1.300">
              <rect x="3" y="0" width="8" height="14.500" rx="1.500" fill="#fff" stroke="none" />
              <path d="M.7 10v4.500q0 2 2 2h8.600q2 0 2-2V10M7 16.500v3M3.500 19.400h7" />
            </svg>
          </TaskSlot>
          <TaskSpacer $w={10} />
          <TaskSlot $w={22}>
            <svg width="21" height="16" viewBox="0 0 21 16" fill="none" stroke="#fff" strokeWidth="1.300">
              <path d="M6 4h13v10H4v-4M19 7h1.500v4H19M1.500 0v3M5.500 0v3M.6 3h5.800v3q0 2-3 2t-3-2zM3.500 8v3" />
            </svg>
          </TaskSlot>
          <TaskSpacer $w={7} />
          <TaskSlot $w={22}>
            <svg width="21" height="18" viewBox="0 0 21 18" fill="none" stroke="#fff" strokeWidth="1.300">
              <path d="M1 6h3l5-4.500v15L4 12H1z" />
              <path d="M12 6q2 3 0 6" />
              <path d="M14.500 4q3.500 5 0 10M17 1.500q5 7.500 0 15" opacity=".5" />
            </svg>
          </TaskSlot>
          <TaskSpacer $w={14} />
          <Lang>ENG</Lang>
          <Clock><span>15:16</span><span>09-06-2021</span></Clock>
          <Notify>
            <svg width="33" height="32" viewBox="0 0 33 32">
              <path d="M0 1h20v17H8l-4 4v-4H0z" fill="#fff" />
              <path d="M4 6h12M4 10h12M4 14h8" stroke="#232a36" strokeWidth="1.300" />
              <circle cx="19.500" cy="20.500" r="9.500" fill="#2c3340" stroke="#8a8f96" strokeWidth="1.300" />
              <BadgeText x="19.500" y="26" textAnchor="middle">2</BadgeText>
            </svg>
          </Notify>
          <DeskEdge />
        </Taskbar>

        <Thumb><MiniDiagram /></Thumb>
        <Toast>
          <ToastHead>
            <ToastApp>
              <svg width="14" height="15" viewBox="0 0 14 15">
                <path d="M1 1h6.500q1 0 1 1V12H3.500L1 11.500z" fill="#ffd980" />
                <path d="M1 1l2.500 1.500v11L1 12z" fill="#e9b84e" />
                <path d="M6.500 13a2.300 2.300 0 0 1 .3-4.600a3 3 0 0 1 5.500.8a1.900 1.900 0 0 1 0 3.800z" fill="#1686dc" />
              </svg>
            </ToastApp>
            <ToastName>OneDrive</ToastName>
            <CloseIcon width="13" height="13" viewBox="0 0 13 13"><path d="M.5 .5l12 12M12.500 .5l-12 12" stroke="#b8b8b8" strokeWidth="1.300" /></CloseIcon>
          </ToastHead>
          <ToastMain>
            <CloudWrap>
              <svg width="75" height="48" viewBox="0 0 75 48">
                <defs>
                  <clipPath id="cl">
                    <circle cx="18.700" cy="29.300" r="18.700" />
                    <circle cx="39" cy="22" r="22" />
                    <circle cx="59.500" cy="32.500" r="15.500" />
                    <rect x="18.700" y="25" width="41" height="23" />
                  </clipPath>
                </defs>
                <g clipPath="url(#cl)">
                  <path d="M0 0H75V48H0z" fill="#fff" />
                  <path d="M14 0H64V17.500Q55 16 44.500 22.500L30 13.500Q24 10 14 11.500z" fill="#979797" />
                  <path d="M0 8L18 10.600Q25 10.600 30 13.500L44.500 22.500L3.500 39.800L0 42z" fill="#c4c4c4" />
                  <path d="M44.500 22.500Q52 17 59.500 17H75V42L72.500 40.500z" fill="#dcdcdc" />
                </g>
              </svg>
            </CloudWrap>
            <div>
              <ToastTitle>Screenshot saved</ToastTitle>
              <ToastText>{"The screenshot was added to your\nOneDrive."}</ToastText>
            </div>
          </ToastMain>
        </Toast>
      </Screen>
    </>
  );
}
